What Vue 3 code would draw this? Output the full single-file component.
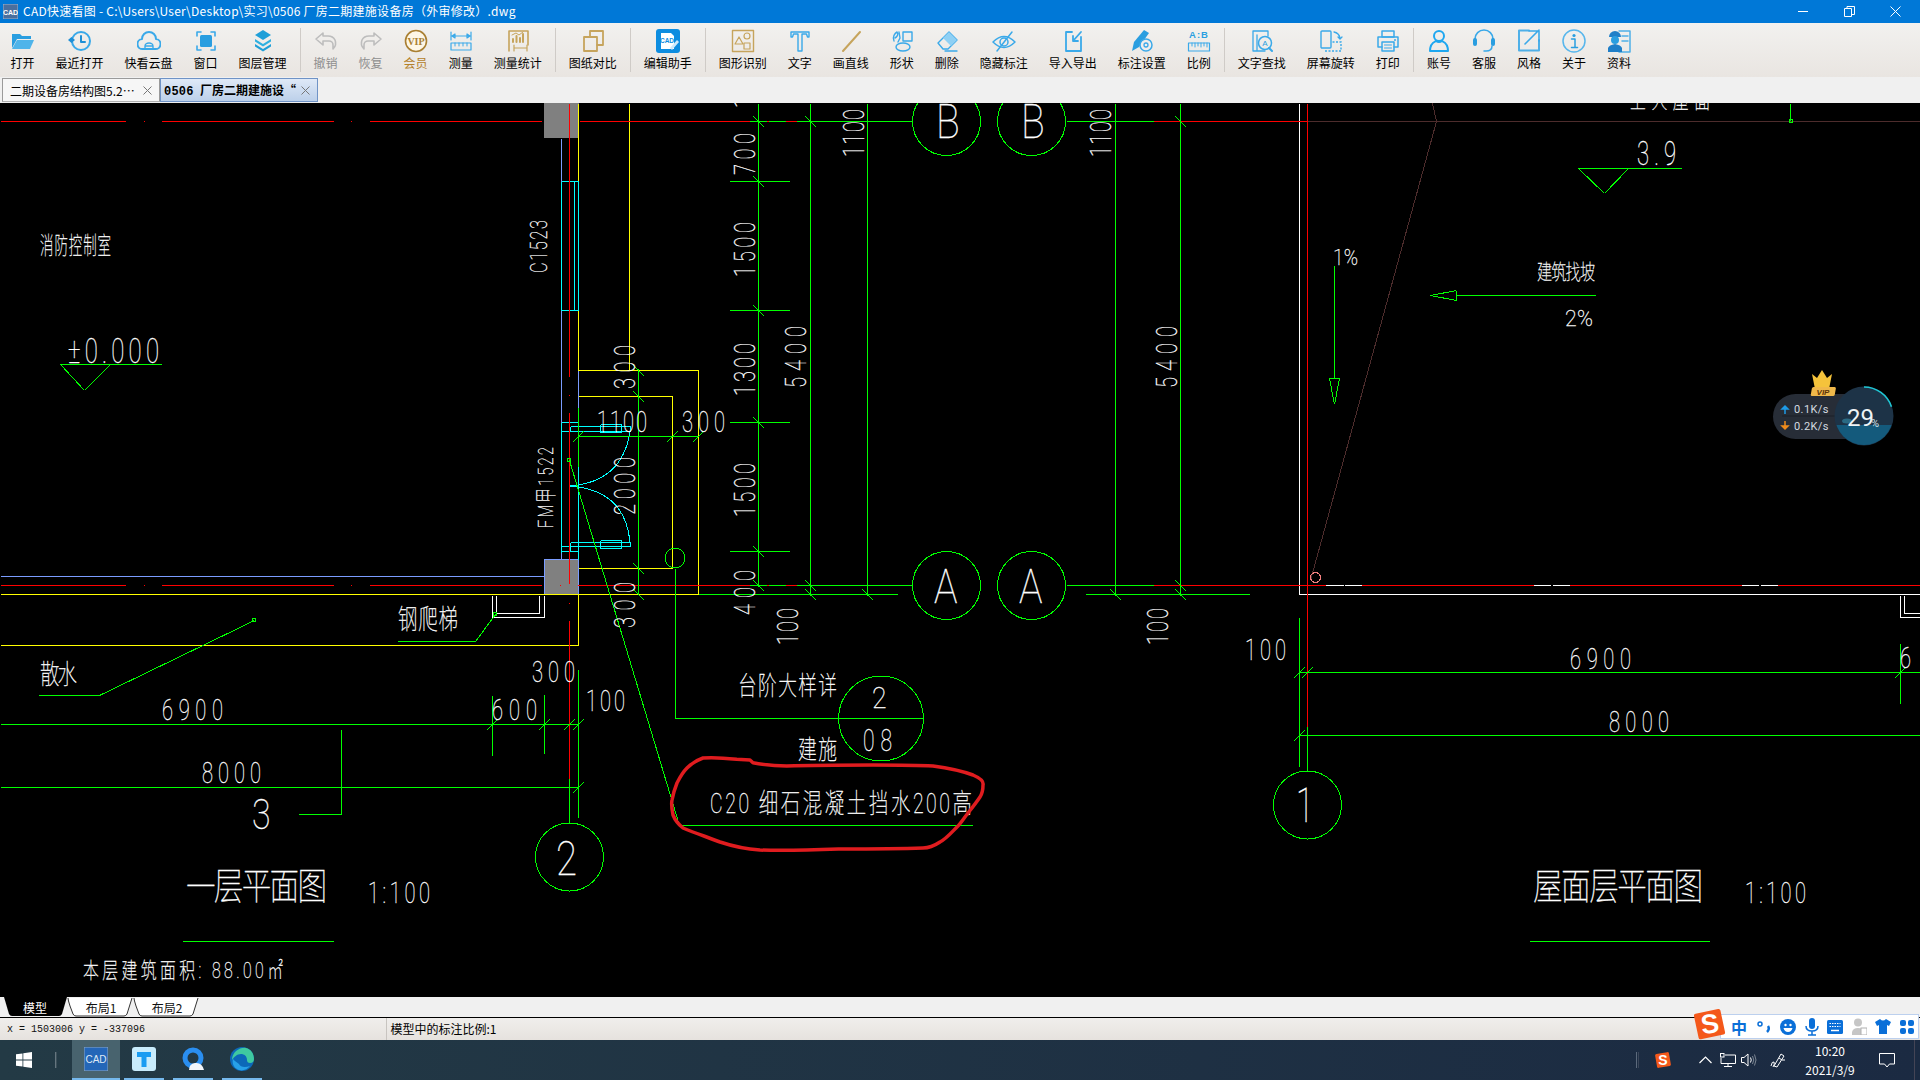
<script setup>
const B = '#38a9e8'
const st = (c = B, w = 1.6) => `fill="none" stroke="${c}" stroke-width="${w}" stroke-linejoin="round" stroke-linecap="round"`
const G = '#c6a45c'
const tools = [
  { t: '打开', i: `<path d="M1 5h8l2 2h9v3H6l-5 9z" fill="#2a9ee0"/><path d="M6 11h17l-4 9H1z" fill="#4fb4ea"/>` },
  { t: '最近打开', i: `<circle cx="13" cy="12" r="9" ${st('#3aa9e9', 2)}/><path d="M13 7v6h4" ${st('#1f8fd6', 2)}/><path d="M0 11l3.500-3 3.500 3-3.500 3z" fill="#1f8fd6"/>` },
  { t: '快看云盘', i: `<path d="M6 20a5 5 0 0 1-1-10 7 7 0 0 1 14 0 5 5 0 0 1-1 10z" ${st('#3aa9e9', 2)}/><path d="M8 20v-3a4 3 0 0 1 8 0v3zM8 17h8" ${st('#3aa9e9', 1.4)}/>` },
  { t: '窗口', i: `<path d="M3 7V3h4M17 3h4v4M21 17v4h-4M7 21H3v-4" ${st('#3aa9e9', 1.6)}/><rect x="6" y="6" width="12" height="12" rx="1.500" fill="#2a9ee0"/>` },
  { t: '图层管理', i: `<path d="M12 1l8 5-8 5-8-5z" fill="#1f9fd8"/><path d="M4 10l8 5 8-5v2.500l-8 5-8-5z" fill="#2fb0e0"/><path d="M4 15l8 5 8-5v2.500l-8 5-8-5z" fill="#1f9fd8"/>` },
  { sep: 1 },
  { t: '撤销', d: 1, i: `<path d="M9 4L2 10l7 6v-4h6a4 4 0 0 1 4 4v4q4-4 2-9-2-4-7-4H9z" ${st('#bdbdbd', 1.6)}/>` },
  { t: '恢复', d: 1, i: `<path d="M15 4l7 6-7 6v-4H9a4 4 0 0 0-4 4v4q-4-4-2-9 2-4 7-4h5z" ${st('#bdbdbd', 1.6)}/>` },
  { t: '会员', v: 1, i: `<circle cx="12" cy="12" r="10.500" fill="#fdf6e6" stroke="#a97f32" stroke-width="1.600"/><text x="12" y="15.500" text-anchor="middle" font-family="Liberation Serif" font-weight="700" font-size="10" fill="#a97f32">VIP</text>` },
  { t: '测量', i: `<path d="M2 3v8M22 3v8M3 7h18M3 7l3-2v4zM21 7l-3-2v4z" ${st('#3aa9e9', 1.2)}/><rect x="2" y="14" width="20" height="7" ${st('#3aa9e9', 1.2)}/><path d="M6 14v3M10 14v3M14 14v3M18 14v3" ${st('#3aa9e9', 1)}/>` },
  { t: '测量统计', i: `<path d="M3 22V2h19v14" ${st(G, 1.600)}/><path d="M7 13v-3M10.500 13V7M14 13V9M17 13V5" ${st(G, 2)}/><path d="M6 6l4-2 3 2 4-3" ${st(G, 1)}/><path d="M8 16v6M21 16v6M8 19h13" ${st(G, 1.200)}/>` },
  { sep: 1 },
  { t: '图纸对比', i: `<path d="M9 8V2h13v14h-6" ${st(G, 1.800)}/><rect x="3" y="8" width="13" height="14" ${st(G, 1.800)}/>` },
  { sep: 1 },
  { t: '编辑助手', i: `<rect x="0" y="0" width="24" height="24" rx="3" fill="#0d8de0"/><path d="M5 4h10l3 3v13H5z" fill="#fff"/><text x="11" y="14" text-anchor="middle" font-family="Liberation Sans" font-weight="700" font-size="6.500" fill="#0d8de0">CAD</text><path d="M14 19l7-8 2 2-7 8z" fill="#cfe9fb"/>` },
  { sep: 1 },
  { t: '图形识别', i: `<rect x="1.500" y="1.500" width="21" height="21" ${st(G, 1.400)}/><path d="M8 8l4 7H4z" ${st(G, 1.200)}/><circle cx="16" cy="7" r="3" ${st(G, 1.200)}/><rect x="13" y="14" width="6" height="6" ${st(G, 1.200)}/>` },
  { t: '文字', i: `<path d="M3 3h18v5h-1.500l-1-3H14v17h-4V5H5.500l-1 3H3z" ${st('#3aa9e9', 1.400)}/>` },
  { t: '画直线', i: `<path d="M4 22L21 3" ${st(G, 2)}/>` },
  { t: '形状', i: `<rect x="13" y="3" width="9" height="9" ${st('#3aa9e9', 1.400)}/><ellipse cx="13" cy="18" rx="7" ry="4" ${st('#3aa9e9', 1.400)}/><path d="M4 12c-2-4 1-8 3-9 2 2 0 5-2 6M9 3l1 6-2 4" ${st('#3aa9e9', 1.400)}/>` },
  { t: '删除', i: `<path d="M3 14L14 3l8 8-9 9H8z" ${st('#3aa9e9', 1.400)}/><path d="M14 3l8 8-6 6-8-8z" fill="#8fd0f4"/><path d="M10 22h12" ${st('#3aa9e9', 1.400)}/>` },
  { t: '隐藏标注', i: `<path d="M1 13q11-11 22 0-11 11-22 0z" ${st('#3aa9e9', 1.500)}/><circle cx="12" cy="13" r="4" ${st('#3aa9e9', 1.500)}/><path d="M5 22L20 3" ${st('#3aa9e9', 1.500)}/>` },
  { t: '导入导出', i: `<path d="M11 3H5v19h15V8" ${st('#3aa9e9', 1.800)}/><path d="M20 3l-8 9M12 7v5h5" ${st('#3aa9e9', 1.800)}/>` },
  { t: '标注设置', i: `<path d="M2 22l2-9L14 1l5 3L9 18z" fill="#2a9ee0"/><circle cx="16" cy="16" r="6" fill="#f0eeec" stroke="#3aa9e9" stroke-width="1.500"/><circle cx="16" cy="16" r="2" ${st('#3aa9e9', 1.300)}/>` },
  { t: '比例', i: `<text x="12" y="9" text-anchor="middle" font-family="Liberation Sans" font-weight="700" font-size="9.500" letter-spacing="1" fill="#2a9ee0">A:B</text><rect x="1.500" y="14" width="21" height="8" ${st('#3aa9e9', 1.200)}/><path d="M5 14v3M8 14v4M11 14v3M14 14v4M17 14v3M20 14v4" ${st('#3aa9e9', 1)}/>` },
  { sep: 1 },
  { t: '文字查找', i: `<path d="M3 2h15v5M3 2v20h12M7 22V6" ${st('#3aa9e9', 1.300)}/><circle cx="15" cy="14" r="6.500" ${st('#3aa9e9', 1.500)}/><text x="15" y="17" text-anchor="middle" font-family="Liberation Sans" font-size="8" fill="#2a9ee0">A</text><path d="M19 19l3 3" ${st('#3aa9e9', 2)}/>` },
  { t: '屏幕旋转', i: `<rect x="2" y="2" width="10" height="17" rx="1" ${st('#3aa9e9', 1.400)}/><path d="M6 22h16v-9h-9" fill="none" stroke="#3aa9e9" stroke-width="1.400" stroke-dasharray="2 1.500"/><path d="M15 3q5 1 6 6M19 8l2 2 2-2" ${st('#3aa9e9', 1.300)}/>` },
  { t: '打印', i: `<rect x="6" y="2" width="12" height="6" ${st('#3aa9e9', 1.500)}/><path d="M6 18H2V8h20v10h-4" ${st('#3aa9e9', 1.500)}/><rect x="6" y="13" width="12" height="9" ${st('#3aa9e9', 1.500)}/><path d="M8.500 16h7M8.500 19h7" ${st('#3aa9e9', 1)}/><circle cx="19" cy="11" r="1" fill="#3aa9e9"/>` },
  { sep: 1 },
  { t: '账号', i: `<circle cx="12" cy="7" r="5" ${st('#1ea7f0', 2)}/><path d="M3 22c0-8 4-9 6-10q3 2 6 0c2 1 6 2 6 10z" ${st('#1ea7f0', 2)}/>` },
  { t: '客服', i: `<path d="M3 13V10a9 9 0 0 1 18 0v3" ${st('#3aa9e9', 1.600)}/><rect x="1" y="9" width="4" height="8" rx="2" fill="#2a9ee0"/><rect x="19" y="9" width="4" height="8" rx="2" fill="#2a9ee0"/><path d="M20 17q0 5-6 5h-2" ${st('#3aa9e9', 1.500)}/>` },
  { t: '风格', i: `<path d="M12 1.500H2v20h20V11" ${st('#4fb0e8', 2)}/><path d="M22 1L8 15M12 2h10v10" ${st('#3aa9e9', 1.600)}/>` },
  { t: '关于', i: `<circle cx="12" cy="12" r="11" ${st('#57b6ec', 1.500)}/><circle cx="12" cy="6.500" r="1.600" fill="#2a9ee0"/><path d="M9.500 10H13v8M9.500 18.500h6" ${st('#2a9ee0', 1.500)}/>` },
  { t: '资料', i: `<path d="M12 2h11v21H12" ${st('#4fb0e8', 1.500)}/><path d="M15 7h6M15 12h6" ${st('#4fb0e8', 1.500)}/><path d="M2 8a6 6 0 0 1 12 0z" fill="#1f7fc8"/><circle cx="8" cy="11" r="4" fill="#2a9ee0"/><path d="M1 23v-4q1-3 7-4 6 1 7 4v4z" fill="#1f7fc8"/>` }
]

const rnd = v => Math.floor(v) + 0.5
const toD = segs => segs.map(s => `M${rnd(s[0])} ${rnd(s[1])}L${rnd(s[2])} ${rnd(s[3])}`).join('')
const backs = [[758, 121], [758, 181], [758, 310], [758, 422], [758, 551], [758, 585], [810, 121], [810, 585], [810, 594], [867, 594], [1115, 594], [1180, 585], [1180, 594], [1180, 121], [638, 370], [638, 396], [638, 568], [638, 594]]
const fwds = [[578, 436], [672, 436], [698, 436], [492, 724], [544, 724], [569, 724], [578, 724], [578, 787], [1299, 672], [1307, 672], [1900, 672], [1299, 735]]
const tick = [
  ...backs.map(([x, y]) => [x - 5, y - 5, x + 6, y + 6]),
  ...fwds.map(([x, y]) => [x - 6, y + 6, x + 5, y - 5])
]
const green = toD([
  [758, 103, 758, 586], [810, 103, 810, 595], [867, 103, 867, 595], [1115, 103, 1115, 595], [1180, 103, 1180, 595],
  [749, 121, 766, 121], [768, 121, 785, 121], [796, 121, 912, 121], [1066, 121, 1153, 121],
  [749, 585, 766, 585], [768, 585, 785, 585], [796, 585, 912, 585], [1066, 585, 1153, 585],
  [698, 594, 897, 594], [1085, 594, 1249, 594],
  [729, 181, 789, 181], [729, 310, 789, 310], [729, 422, 789, 422], [729, 551, 789, 551],
  [638, 368, 638, 593], [578, 436, 698, 436], [578, 407, 578, 466],
  [0, 724, 578, 724], [492, 695, 492, 755], [544, 694, 544, 753], [578, 669, 578, 817],
  [0, 787, 578, 787], [341, 729, 341, 814], [341, 814, 298, 814], [569, 778, 569, 823],
  [254, 620, 99, 695], [99, 695, 38, 695], [495, 614, 475, 641], [475, 641, 397, 641],
  [182, 941, 333, 941], [675, 568, 675, 718], [675, 718, 923, 718],
  [569, 460, 679, 825], [679, 825, 972, 825],
  [1299, 617, 1299, 766], [1299, 672, 1920, 672], [1299, 735, 1920, 735], [1900, 643, 1900, 703], [1307, 726, 1307, 771], [1529, 941, 1709, 941],
  [1578, 168, 1681, 168], [1578, 168, 1604, 193], [1604, 193, 1628, 168],
  [60, 364, 161, 364], [60, 364, 84, 390], [84, 390, 110, 364],
  [1334, 265, 1334, 378], [1329, 378, 1339, 378], [1329, 378, 1334, 404], [1339, 378, 1334, 404],
  [1456, 295, 1595, 295], [1430, 295, 1456, 290], [1430, 295, 1456, 300], [1456, 290, 1456, 300],
  [1790, 103, 1790, 120], ...tick
])
const red = toD([
  [0, 121, 125, 121], [143, 121, 144, 121], [161, 121, 333, 121], [350, 121, 351, 121], [369, 121, 541, 121], [579, 121, 749, 121], [766, 121, 768, 121], [785, 121, 796, 121], [1153, 121, 1307, 121],
  [0, 585, 125, 585], [143, 585, 144, 585], [161, 585, 333, 585], [350, 585, 351, 585], [369, 585, 541, 585], [577, 585, 749, 585], [766, 585, 768, 585], [785, 585, 796, 585], [559, 585, 560, 585],
  [1153, 585, 1325, 585], [1361, 585, 1533, 585], [1569, 585, 1741, 585], [1777, 585, 1920, 585],
  [569, 103, 569, 376], [569, 394, 569, 395], [569, 412, 569, 583], [569, 602, 569, 603], [569, 620, 569, 778],
  [1307, 103, 1307, 726]
])
const yellow = toD([
  [0, 594, 698, 594], [578, 594, 578, 645], [0, 645, 578, 645], [578, 103, 578, 370], [578, 370, 698, 370], [698, 370, 698, 594],
  [578, 396, 672, 396], [672, 396, 672, 568], [578, 568, 672, 568], [629, 103, 629, 370]
])
const blue = toD([
  [0, 576, 544, 576], [561, 138, 561, 181], [561, 310, 561, 422], [578, 370, 578, 407], [561, 551, 561, 559], [578, 551, 578, 559]
])
const cyan = toD([
  [561, 181, 561, 310], [578, 181, 578, 310], [574, 181, 574, 310], [561, 181, 578, 181], [561, 310, 578, 310],
  [578, 466, 578, 559], [561, 422, 561, 552], [561, 422, 578, 422], [561, 431, 630, 431], [570, 426, 630, 426], [570, 426, 570, 431], [630, 426, 630, 431],
  [600, 424, 621, 424], [600, 432, 621, 432], [600, 424, 600, 432], [621, 424, 621, 432],
  [570, 542, 630, 542], [561, 546, 630, 546], [570, 542, 570, 551], [630, 542, 630, 546], [561, 551, 578, 551],
  [600, 540, 621, 540], [600, 548, 621, 548], [600, 540, 600, 548], [621, 540, 621, 548]
])
const white = toD([
  [1299, 103, 1299, 594], [1299, 594, 1920, 594],
  [1307, 117, 1307, 134], [1307, 136, 1307, 153], [1307, 324, 1307, 342], [1307, 344, 1307, 361], [1307, 531, 1307, 549], [1307, 551, 1307, 568],
  [1325, 585, 1343, 585], [1344, 585, 1361, 585], [1533, 585, 1550, 585], [1552, 585, 1569, 585], [1741, 585, 1758, 585], [1760, 585, 1777, 585],
  [492, 595, 492, 617], [496, 595, 496, 613], [492, 617, 544, 617], [496, 613, 539, 613], [544, 595, 544, 617], [539, 595, 539, 613],
  [1900, 595, 1900, 617], [1904, 595, 1904, 613], [1900, 617, 1920, 617], [1904, 613, 1920, 613]
])
const brown = toD([[1307, 121, 1920, 121], [1436, 121, 1310, 580], [1436, 121, 1432, 103]])

const circles = [
  [569.5, 857, 34], [946.5, 121.5, 34], [1031.5, 121.5, 34], [946.5, 585.5, 34], [1031.5, 585.5, 34],
  [881, 718.5, 42.5], [1307.5, 805, 34], [675, 558, 10]
]
// digit texts: cap height h => font size; narrowed horizontally
const d = (t, x, y, w, h = 21, r = 0, sx = 0.68) => ({ t, x, y, w, fs: h / 0.71, sx, r })
const c = (t, x, y, w, fs, sx = 0.72) => ({ t, x, y, w, fs, sx, r: 0 })
const texts = [
  d('1', 755, 108, 6, 21, -90), d('700', 755, 175, 42, 21, -90), d('1500', 755, 277, 55, 21, -90), d('1300', 755, 396, 53, 21, -90),
  d('1500', 755, 517, 54, 21, -90), d('400', 755, 615, 45, 21, -90), d('5400', 806, 388, 62, 21, -90), d('5400', 1177, 388, 62, 21, -90),
  d('1100', 864, 157, 48, 21, -90), d('1100', 1111, 157, 48, 21, -90), d('100', 798, 645, 37, 21, -90), d('100', 1168, 645, 37, 21, -90),
  d('300', 635, 389, 44, 21, -90), d('2000', 635, 515, 58, 21, -90), d('300', 635, 628, 46, 21, -90),
  d('C1523', 547, 273, 53, 17, -90), d('FM甲1522', 553, 528, 81, 15, -90),
  d('±0.000', 68, 363, 91, 25), d('1100', 597, 432, 50), d('300', 682, 432, 43), d('6900', 162, 720, 61), d('600', 492, 720, 45),
  d('300', 532, 682, 43), d('100', 586, 711, 39), d('8000', 202, 783, 59), d('3', 252, 829, 14, 30, 0, 0.8), d('1:100', 368, 903, 62, 21),
  d('2', 556, 875, 16, 34, 0, 0.8), d('A', 934, 603, 25, 34, 0, 0.82), d('A', 1019, 603, 25, 34, 0, 0.82), d('B', 936, 138, 23, 34, 0, 0.82), d('B', 1021, 138, 23, 34, 0, 0.82),
  d('2', 872, 708, 18, 21, 0, 0.9), d('08', 863, 751, 29, 22), d('3.9', 1637, 165, 39, 23), d('1%', 1333, 265, 25, 16, 0, 0.85), d('2%', 1565, 326, 28, 16, 0, 0.95),
  d('100', 1245, 660, 41), d('6900', 1570, 669, 61), d('8000', 1609, 732, 60), d('69', 1900, 668, 32), d('1', 1296, 822, 8, 34), d('1:100', 1745, 903, 61, 21),
  c('消防控制室', 40, 254, 71, 24, 0.56), c('散水', 40, 684, 37, 27), c('钢爬梯', 398, 629, 60, 27), c('一层平面图', 186, 900, 141, 37, 0.8),
  c('本层建筑面积: 88.00㎡', 83, 978, 200, 22), c('台阶大样详', 738, 695, 99, 26), c('建施', 798, 759, 39, 26),
  c('C20 细石混凝土挡水200高', 710, 813, 262, 27), c('建筑找坡', 1537, 279, 58, 21), c('屋面层平面图', 1533, 900, 170, 37, 0.8), c('上人屋面', 1630, 108, 80, 22)
]
const textAttr = x => ({
  transform: `translate(${x.x} ${x.y}) rotate(${x.r}) scale(${x.sx} 1)`,
  'font-size': x.fs,
  textLength: x.w / x.sx,
  lengthAdjust: 'spacing'
})
const cloud = 'M736.7 759.3L750 760L753 762.7C765 765 775 766 786.7 766C815 765 845 765 873 765C895 765 915 765 933 766C948 768 962 771 973 775C980 778 984 781 983 785C983 790 982 794 980 797C976 803 972 808 968 813C964 818 961 823 957 827C951 833 946 839 940 842C934 846 929 848 923 848C895 849 868 849 840 849C813 850 787 851 760 850C745 849 732 846 720 842C707 837 695 833 683 828C678 824 675 820 673 815C672 810 671 805 672 800C673 794 675 788 677 783C680 777 683 772 687 768C692 763 697 760 703 758C714 757 725 758 736.7 759.3Z'
</script>

<template>
  <div class="app">
    <header class="title">
      <svg class="appico" width="15" height="15" viewBox="0 0 15 15"><rect width="15" height="15" fill="#4a6f9e" stroke="#9fb4cc"/><text x="7.500" y="11" text-anchor="middle" font-size="7" font-family="Liberation Sans" font-weight="700" fill="#fff">CAD</text></svg>
      <span class="title-text">CAD快速看图 - C:\Users\User\Desktop\实习\0506 厂房二期建施设备房（外审修改）.dwg</span>
      <div class="winbtns">
        <svg width="11" height="11" viewBox="0 0 11 11"><path d="M0 5.500h10" stroke="#fff"/></svg>
        <svg width="11" height="11" viewBox="0 0 11 11"><path d="M.5 2.500h7v8h-7zM3 2.500V.5h7.500v8H7.500" fill="none" stroke="#fff"/></svg>
        <svg width="11" height="11" viewBox="0 0 11 11"><path d="M.5.5l10 10M10.500.5l-10 10" stroke="#fff"/></svg>
      </div>
    </header>

    <nav class="toolbar">
      <template v-for="(b, i) in tools" :key="i">
        <div v-if="b.sep" class="sep"></div>
        <div v-else class="tool" :class="{ off: b.d, vip: b.v }">
          <svg class="tico" width="24" height="24" viewBox="0 0 24 24" v-html="b.i"></svg>
          <span>{{ b.t }}</span>
        </div>
      </template>
    </nav>

    <div class="tabs">
      <div class="tab">
        <span class="tabname">二期设备房结构图5.2…</span>
        <svg class="x" width="9" height="9" viewBox="0 0 9 9"><path d="M.5.5l8 8M8.500.5l-8 8" stroke="#777"/></svg>
      </div>
      <div class="tab on">
        <span class="tabname"><span class="num">0506</span>厂房二期建施设“</span>
        <svg class="x" width="9" height="9" viewBox="0 0 9 9"><path d="M.5.5l8 8M8.500.5l-8 8" stroke="#777"/></svg>
      </div>
    </div>

    <main class="canvas">
      <svg class="cad" width="1920" height="894" viewBox="0 103 1920 894">
        <rect x="544" y="103" width="35" height="35" fill="#808080"/>
        <rect x="544.500" y="559.500" width="34" height="35" fill="#808080" stroke="#7a9cff"/>
        <g fill="none" stroke-width="1" shape-rendering="crispEdges">
          <path :d="brown" stroke="#4d2c2c"/>
          <path :d="blue" stroke="#7a9cff"/>
          <path :d="yellow" stroke="#ffff00"/>
          <path :d="white" stroke="#ffffff"/>
          <path :d="cyan" stroke="#00ffff"/>
          <path d="M630 432Q622 482 570 486M570 486Q625 490 630 542" stroke="#00ffff"/>
          <path :d="red" stroke="#ff0000"/>
          <path :d="green" stroke="#00ff00"/>
          <circle v-for="(k, i) in circles" :key="i" :cx="k[0]" :cy="k[1]" :r="k[2]" stroke="#00ff00"/>
          <circle cx="1315.500" cy="577.500" r="5" stroke="#f07f7f"/>
          <rect x="252.500" y="618.500" width="3" height="3" stroke="#00ff00"/>
          <rect x="493.500" y="612.500" width="3" height="3" stroke="#00ff00"/>
          <rect x="1789" y="119.500" width="3" height="3" stroke="#00ff00"/>
          <rect x="567.500" y="458.500" width="3" height="3" stroke="#00ff00"/>
        </g>
        <g class="cadtext">
          <text v-for="(x, i) in texts" :key="i" v-bind="textAttr(x)">{{ x.t }}</text>
        </g>
        <path :d="cloud" fill="none" stroke="#e01c1f" stroke-width="3.500" stroke-linejoin="round"/>
      </svg>

      <svg class="speed" width="150" height="90" viewBox="0 0 150 90">
        <defs>
          <clipPath id="ballclip"><circle cx="94" cy="51" r="29"/></clipPath>
        </defs>
        <rect x="3" y="29" width="100" height="45" rx="22.500" fill="#272d37"/>
        <path d="M12 51h70" stroke="#1c2129"/>
        <path d="M42 9l5 4 5-8 5 8 5-4-3 15H45z" fill="#f5c33b"/>
        <rect x="40" y="22" width="24" height="9" rx="1.500" fill="#f0b84a" transform="skewX(-10) translate(6 0)"/>
        <text x="53" y="30" text-anchor="middle" font-family="Liberation Sans" font-size="8" font-weight="700" font-style="italic" fill="#5a3208">VIP</text>
        <path d="M15 49v-7M12 44l3-3 3 3z" stroke="#1e9be8" fill="#1e9be8" stroke-width="1.500"/>
        <path d="M15 56v7M12 61l3 3 3-3z" stroke="#f08c1c" fill="#f08c1c" stroke-width="1.500"/>
        <text x="24" y="48" class="kb">0.1K/s</text>
        <text x="24" y="65" class="kb">0.2K/s</text>
        <circle cx="94" cy="51" r="29.500" fill="#1d3347"/>
        <rect x="64" y="60" width="60" height="30" fill="#145a7c" clip-path="url(#ballclip)"/>
        <ellipse cx="77" cy="56" rx="5" ry="2.500" fill="#2a6a84"/>
        <path d="M94 22a29 29 0 0 1 29 29" fill="none" stroke="#20c6d4" stroke-width="1.600" stroke-dasharray="36 100"/>
        <text x="77" y="61" class="pct">29</text>
        <text x="101" y="62" class="pcts">%</text>
      </svg>
    </main>

    <div class="sheets">
      <div class="sheet black">
        <svg width="66" height="20" viewBox="0 0 66 20"><path d="M3 0l5 17q1 2 3 2h47q2 0 3-2L66 0z" fill="#000"/></svg>
        <span>模型</span>
      </div>
      <div class="sheet">
        <svg width="66" height="20" viewBox="0 0 66 20"><path d="M1 1q0 2 2 8l3 8q1 2 3 2h48q2 0 3-2l5-16" fill="#fff" stroke="#333"/></svg>
        <span>布局1</span>
      </div>
      <div class="sheet">
        <svg width="66" height="20" viewBox="0 0 66 20"><path d="M1 1q0 2 2 8l3 8q1 2 3 2h48q2 0 3-2l5-16" fill="#fff" stroke="#333"/></svg>
        <span>布局2</span>
      </div>
    </div>

    <div class="status">
      <span class="coord">x = 1503006 y = -337096</span>
      <span class="scale">模型中的标注比例:1</span>

      <div class="ime">
        <svg class="imelogo" width="34" height="32" viewBox="0 0 34 32"><rect x="3" y="3" width="27" height="26" rx="2" fill="#f4581a" transform="rotate(-12 17 16)"/><text x="17" y="25" text-anchor="middle" font-family="Liberation Sans" font-weight="700" font-size="27" fill="#fff" transform="rotate(-8 17 16)">S</text></svg>
        <span class="zh">中</span>
        <svg width="16" height="16" viewBox="0 0 16 16"><circle cx="4" cy="5" r="2" fill="none" stroke="#0a6fd8" stroke-width="1.500"/><path d="M12 7q2 3-1 6" fill="none" stroke="#0a6fd8" stroke-width="2.500"/></svg>
        <svg width="16" height="16" viewBox="0 0 16 16"><circle cx="8" cy="8" r="8" fill="#0a6fd8"/><circle cx="5.500" cy="6" r="1.200" fill="#fff"/><circle cx="10.500" cy="6" r="1.200" fill="#fff"/><path d="M3.500 9h9q-1 4-4.500 4T3.500 9z" fill="#fff"/></svg>
        <svg width="14" height="18" viewBox="0 0 14 18"><rect x="4" y="0" width="6" height="11" rx="3" fill="#0a6fd8"/><path d="M1 8q0 5 6 5t6-5M7 13v4M3 17h8" fill="none" stroke="#0a6fd8" stroke-width="1.500"/></svg>
        <svg width="16" height="14" viewBox="0 0 16 14"><rect width="16" height="14" rx="1.500" fill="#0a6fd8"/><path d="M2.500 3.500h11M2.500 6.500h11" stroke="#fff" stroke-dasharray="1.500 1"/><path d="M4 10.500h8" stroke="#fff" stroke-width="1.500"/></svg>
        <svg width="15" height="17" viewBox="0 0 15 17"><circle cx="6" cy="4.500" r="4" fill="#c6c6c6"/><path d="M0 17v-3q1-4 6-4t6 4v3z" fill="#c6c6c6"/><rect x="9" y="10" width="6" height="7" fill="#fff" stroke="#b0b0b0"/></svg>
        <svg width="16" height="15" viewBox="0 0 16 15"><path d="M5 0L0 3l2 4 2-1v9h8V6l2 1 2-4-5-3q-3 3-6 0z" fill="#0a6fd8"/></svg>
        <svg width="14" height="14" viewBox="0 0 14 14"><rect width="6" height="6" rx="2" fill="#0a6fd8"/><rect x="8" width="6" height="6" rx="2" fill="#0a6fd8"/><rect y="8" width="6" height="6" rx="2" fill="#0a6fd8"/><rect x="8" y="8" width="6" height="6" rx="2" fill="#0a6fd8"/></svg>
      </div>
    </div>

    <footer class="taskbar">
      <svg class="win" width="16" height="16" viewBox="0 0 16 16"><path d="M0 2.300l6.500-.9v6.200H0zM7.300 1.300L16 0v7.600H7.300zM0 8.400h6.500v6.200L0 13.700zM7.300 8.400H16V16l-8.700-1.300z" fill="#fff"/></svg>
      <div class="tsep"></div>
      <div class="app-btn active">
        <svg width="24" height="24" viewBox="0 0 24 24"><rect width="24" height="24" fill="#2466b8" stroke="#8fa7bf"/><text x="12" y="16" text-anchor="middle" font-family="Liberation Sans" font-size="10" fill="#dfe9f5">CAD</text></svg>
      </div>
      <div class="app-btn">
        <svg width="24" height="24" viewBox="0 0 24 24"><rect width="24" height="24" rx="3" fill="#c9ecfc"/><path d="M5 5h14v5h-4.500v10h-5V10H5z" fill="#1a9cf2"/></svg>
      </div>
      <div class="app-btn">
        <svg width="24" height="24" viewBox="0 0 24 24"><circle cx="12" cy="11" r="8" fill="none" stroke="#2a8ef0" stroke-width="5"/><path d="M8 23q0-6 6-7 7-1 9 7z" fill="#f2f6fb"/></svg>
      </div>
      <div class="app-btn">
        <svg width="24" height="24" viewBox="0 0 24 24"><circle cx="12" cy="12" r="12" fill="#0c68b8"/><path d="M2 13C2 5 10 0 16 1c5 1 8 6 8 11 0 2-1 4-4 4-2 0-3-1-3-3 0-4-3-6-6-6-4 0-7 3-9 6z" fill="#3fc9a0"/><path d="M9 17c1 3 6 4 11 2-3 4-9 6-13 3-4-2-5-7-4-10 1 2 4 3 6 5z" fill="#27a0e8"/></svg>
      </div>

      <div class="tray">
        <div class="tsep2"></div>
        <svg class="traylogo" width="16" height="16" viewBox="0 0 16 16"><rect x="1" y="1" width="14" height="14" rx="1.500" fill="#f4581a" transform="rotate(-10 8 8)"/><text x="8" y="13" text-anchor="middle" font-family="Liberation Sans" font-weight="700" font-size="14" fill="#fff">S</text></svg>
        <svg class="chev" width="13" height="8" viewBox="0 0 13 8"><path d="M.5 7l6-6 6 6" fill="none" stroke="#fff" stroke-width="1.200"/></svg>
        <svg class="net" width="16" height="14" viewBox="0 0 16 14"><path d="M5 2h10.500v8.500H1V5M8 10.500V13M4 13.500h8" fill="none" stroke="#fff"/><rect x=".5" y=".5" width="3.500" height="3.500" fill="none" stroke="#fff"/></svg>
        <svg class="vol" width="16" height="14" viewBox="0 0 16 14"><path d="M.5 4.500h2.500l4-3.500v12l-4-3.500H.5z" fill="none" stroke="#fff"/><path d="M9.500 4.500q1.500 2.500 0 5" fill="none" stroke="#fff"/><path d="M11.500 3q2.500 4 0 8M13.500 1.500q3 5.500 0 11" fill="none" stroke="#7d8794"/></svg>
        <svg class="pen" width="16" height="16" viewBox="0 0 16 16"><path d="M4 14L11 2l3 2-7 11zM9 6l3 2M15 8h-3M1 14q1-5 3-4 1 2-1 5" fill="none" stroke="#fff"/></svg>
        <div class="clock"><span>10:20</span><span>2021/3/9</span></div>
        <svg class="note" width="16" height="15" viewBox="0 0 16 15"><path d="M.5.5h15v10.500h-5l-2.500 3-2.500-3h-5z" fill="none" stroke="#fff"/></svg>
        <div class="showdesk"></div>
      </div>
    </footer>
  </div>
</template>

<style scoped>
.app { width: 1920px; height: 1080px; display: flex; flex-direction: column; overflow: hidden; font-family: "Noto Sans CJK SC", "Liberation Sans", sans-serif; font-size: 12px; color: #000; background: #000; }

.title { height: 23px; background: #0078d7; color: #fff; display: flex; align-items: center; padding-left: 3px; }
.appico { margin-right: 5px; }
.title-text { font-size: 12px; line-height: 21px; height: 23px; letter-spacing: .26px; white-space: nowrap; }
.winbtns { margin-left: auto; display: flex; gap: 35px; padding-right: 19px; }

.toolbar { height: 54px; background: linear-gradient(#f2f1ef, #e9e5e1); display: flex; align-items: flex-start; }
.tool { display: flex; flex-direction: column; align-items: center; padding: 6px 10.5px 0; white-space: nowrap; }
.tico { display: block; }
.tool span { line-height: 14px; margin-top: 3px; font-size: 12px; color: #000; }
.tool.off span { color: #8e8e8e; }
.tool.vip span { color: #b4812a; }
.sep { width: 1px; height: 44px; margin: 5px 2px 0 3px; background: #cfcbc7; }

.tabs { height: 26px; background: #f0f0f0; display: flex; padding: 1px 0 1px 2px; box-sizing: border-box; }
.tab { width: 158px; box-sizing: border-box; border: 1px solid #9a9a9a; border-bottom-color: #b0b0b0; background: #f6f6f6; display: flex; align-items: center; padding-left: 7px; font-size: 12px; }
.tabname { width: 133px; white-space: nowrap; overflow: hidden; }
.tab .x { flex: none; }
.tab.on { background: linear-gradient(#dfe9f7, #bcd0ea); border-color: #6f93c6; padding-left: 3px; font-weight: 700; }
.tab.on .tabname { width: 137px; }
.num { display: inline-block; width: 36px; font-family: "Liberation Mono", monospace; letter-spacing: .2px; }

.canvas { position: relative; height: 894px; background: #000; overflow: hidden; }
.cad { display: block; }
.cadtext { fill: #fff; stroke: #fff; stroke-width: .3; font-family: Roboto, "Noto Sans CJK SC", sans-serif; font-weight: 100; }
.speed { position: absolute; left: 1770px; top: 262px; }
.kb { fill: #d5dbe0; font-family: Roboto, sans-serif; font-size: 11px; letter-spacing: .4px; }
.pct { fill: #eef4f6; font-family: Roboto, sans-serif; font-size: 24px; }
.pcts { fill: #d5e4ea; font-family: Roboto, sans-serif; font-size: 11px; }

.sheets { height: 21px; box-sizing: border-box; background: #f0f0f0; border-bottom: 1px solid #000; display: flex; padding-left: 1px; }
.sheet { position: relative; width: 66px; height: 20px; display: flex; align-items: center; justify-content: center; }
.sheet svg { position: absolute; left: 0; top: 0; }
.sheet span { position: relative; font-size: 12px; color: #111; padding-left: 2px; }
.sheet.black span { color: #fff; }

.status { position: relative; height: 22px; background: linear-gradient(#f0eeec, #e6e2de); display: flex; align-items: center; }
.coord { width: 378.5px; padding-left: 7px; font-family: "Liberation Mono", monospace; font-size: 10px; color: #111; white-space: pre; }
.scale { border-left: 1px solid #c8c4c0; padding-left: 4px; line-height: 22px; }
.ime { position: absolute; left: 1694px; top: -4px; width: 225px; height: 25px; box-sizing: border-box; padding-left: 37px; padding-right: 5px; display: flex; align-items: center; justify-content: space-between; background: linear-gradient(90deg, transparent 26px, #fff 26px); }
.ime::before { content: ""; position: absolute; left: 26px; right: 0; top: 0; bottom: 0; border: 1px solid #bcd0ee; }
.imelogo { position: absolute; left: -1px; top: -6px; z-index: 1; }
.ime > svg:not(.imelogo), .zh { position: relative; }
.zh { color: #0a6fd8; font-size: 16px; font-weight: 700; line-height: 18px; }

.taskbar { height: 40px; background: linear-gradient(90deg, #233a45, #1b2a42); display: flex; align-items: center; }
.win { margin-left: 16px; }
.tsep { width: 2px; height: 16px; margin: 0 15px 0 23px; border-left: 1px solid #66767f; border-right: 1px solid #3b4f59; box-sizing: border-box; }
.app-btn { width: 40px; height: 40px; margin-right: 9px; box-sizing: border-box; border-bottom: 2px solid #76b9ed; display: flex; align-items: center; justify-content: center; }
.app-btn.active { width: 48px; margin-right: 4px; background: #48636e; }
.tray { margin-left: auto; height: 40px; display: flex; align-items: center; color: #fff; }
.tsep2 { width: 3px; height: 16px; border-left: 1px solid #5c6a7c; border-right: 1px solid #3a4659; box-sizing: border-box; margin-right: 16px; }
.chev { margin-left: 28px; }
.net { margin-left: 8.5px; }
.vol { margin-left: 5px; }
.pen { margin-left: 13px; }
.clock { width: 76px; margin-left: 6px; display: flex; flex-direction: column; align-items: center; font-size: 12px; line-height: 19px; }
.note { margin-left: 11px; }
.showdesk { width: 1px; height: 40px; background: #445; margin-left: 19px; margin-right: 5px; }
</style>
